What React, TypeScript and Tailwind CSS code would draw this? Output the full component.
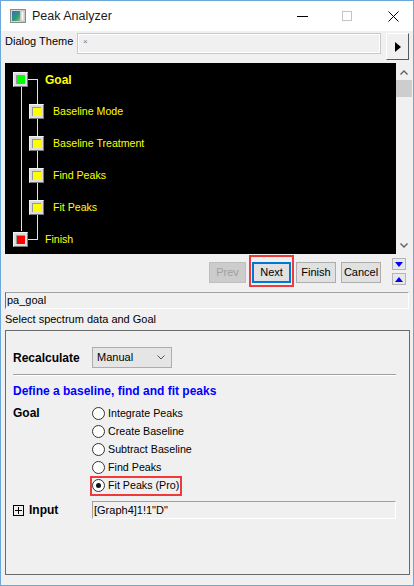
import React from "react";

const Box = ({ color }: { color: string }) => (
  <div className="w-[15px] h-[15px] border border-t-[#f4f4f4] border-l-[#f4f4f4] border-r-[#7a7a7a] border-b-[#7a7a7a] bg-[#dcdcdc] p-[2px] shrink-0">
    <div className="w-full h-full border-t border-l border-t-[#9a9a9a] border-l-[#9a9a9a]" style={{ background: color }} />
  </div>
);

const Radio = ({ label, checked }: { label: string; checked?: boolean }) => (
  <div className="h-[18px] flex items-center">
    <div className="w-[13px] h-[13px] rounded-full border border-[#333] bg-white flex items-center justify-center shrink-0">
      {checked && <div className="w-[5px] h-[5px] rounded-full bg-[#111]" />}
    </div>
    <span className="ml-[3px] text-[10.7px] text-black leading-none">{label}</span>
  </div>
);

const Btn = ({ label, disabled, cls }: { label: string; disabled?: boolean; cls?: string }) => (
  <div
    className={
      "h-[21px] flex items-center justify-center text-[11px] leading-none " +
      (disabled
        ? "bg-[#cccccc] border border-[#bfbfbf] text-[#a0a0a0] "
        : "bg-[#e1e1e1] border border-[#adadad] text-black ") +
      (cls || "")
    }
  >
    {label}
  </div>
);

export default function App() {
  return (
    <div className="w-[414px] h-[586px] bg-[#f0f0f0] border border-[#6fa6d8] flex flex-col overflow-hidden font-['Liberation_Sans',Arial,sans-serif] text-black">
      {/* Title bar */}
      <div className="h-[30px] bg-white flex items-center shrink-0">
        <svg className="ml-[9px]" width="16" height="14" viewBox="0 0 16 14">
          <defs>
            <linearGradient id="g1" x1="0" y1="0" x2="1" y2="1">
              <stop offset="0" stopColor="#3a6fb0" />
              <stop offset="0.6" stopColor="#2f9a7a" />
              <stop offset="1" stopColor="#7cc46a" />
            </linearGradient>
          </defs>
          <rect x="0.5" y="0.5" width="15" height="13" fill="#d8d8d8" stroke="#8a8a8a" />
          <rect x="2" y="2" width="8" height="10" fill="url(#g1)" />
          <rect x="11" y="2" width="3" height="10" fill="#f4f4f4" stroke="#a0a0a0" strokeWidth="0.5" />
        </svg>
        <span className="ml-[6px] text-[12.5px] text-[#1a1a1a]">Peak Analyzer</span>
        <div className="flex-1" />
        <svg width="11" height="10" viewBox="0 0 11 10">
          <line x1="0" y1="5.5" x2="11" y2="5.5" stroke="#000" strokeWidth="1" />
        </svg>
        <svg className="ml-[34px]" width="10" height="10" viewBox="0 0 10 10">
          <rect x="0.5" y="0.5" width="9" height="9" fill="none" stroke="#c4c4c4" />
        </svg>
        <svg className="ml-[36px] mr-[14px]" width="11" height="11" viewBox="0 0 11 11">
          <path d="M0.5 0.5 L10.5 10.5 M10.5 0.5 L0.5 10.5" stroke="#000" strokeWidth="1" />
        </svg>
      </div>

      {/* Dialog theme row */}
      <div className="h-[32px] flex items-start pl-[4px] pt-[2px] shrink-0">
        <span className="text-[11px] mt-[1px] w-[72px] leading-[14px]">Dialog Theme</span>
        <div className="w-[304px] h-[21px] border border-[#c9c9c9] bg-[#f0f0f0] flex items-center">
          <div className="w-full h-full border border-white flex items-start">
            <span className="ml-[4px] mt-[3px] text-[8px] text-[#777] leading-none">×</span>
          </div>
        </div>
        <div className="ml-[5px] w-[23px] h-[27px] border border-t-white border-l-white border-r-[#5a5a5a] border-b-[#5a5a5a] bg-[#f0f0f0] flex items-center justify-center">
          <svg width="6" height="10" viewBox="0 0 6 10">
            <path d="M0 0 L6 5 L0 10 Z" fill="#000" />
          </svg>
        </div>
      </div>

      {/* Tree panel */}
      <div className="h-[191px] ml-[4px] flex shrink-0">
        <div className="w-[391px] h-full bg-black relative">
          <svg className="absolute left-0 top-0" width="60" height="191" viewBox="0 0 60 191">
            <line x1="16.5" y1="23" x2="16.5" y2="168" stroke="#ffff00" />
            <line x1="32.5" y1="16" x2="32.5" y2="177" stroke="#ffff00" />
            <line x1="23" y1="16.5" x2="33" y2="16.5" stroke="#ffff00" />
            <line x1="23" y1="176.5" x2="33" y2="176.5" stroke="#ffff00" />
          </svg>
          <div className="relative flex flex-col">
            <div className="h-[32px] flex items-center pl-[8px]">
              <Box color="#00ff00" />
              <span className="ml-[17px] mt-[2px] text-[12px] font-bold text-[#ffff00]">Goal</span>
            </div>
            {["Baseline Mode", "Baseline Treatment", "Find Peaks", "Fit Peaks"].map((t) => (
              <div key={t} className="h-[32px] flex items-center pl-[24px]">
                <Box color="#ffff00" />
                <span className="ml-[9px] mt-[2px] text-[10.6px] text-[#ffff00]">{t}</span>
              </div>
            ))}
            <div className="h-[32px] flex items-center pl-[8px]">
              <Box color="#ff0000" />
              <span className="ml-[17px] mt-[2px] text-[10.6px] text-[#ffff00]">Finish</span>
            </div>
          </div>
        </div>
        <div className="w-[16px] h-full bg-[#f0f0f0] flex flex-col items-center">
          <svg className="mt-[7px]" width="8" height="5" viewBox="0 0 8 5">
            <path d="M0.5 4.5 L4 1 L7.5 4.5" stroke="#606060" strokeWidth="1.4" fill="none" />
          </svg>
          <div className="mt-[5px] w-full h-[17px] bg-[#cdcdcd]" />
          <div className="flex-1" />
          <svg className="mb-[6px]" width="8" height="5" viewBox="0 0 8 5">
            <path d="M0.5 0.5 L4 4 L7.5 0.5" stroke="#606060" strokeWidth="1.4" fill="none" />
          </svg>
        </div>
      </div>

      {/* Buttons row */}
      <div className="h-[38px] flex items-start pl-[208px] shrink-0">
        <Btn label="Prev" disabled cls="w-[37px] mt-[8px]" />
        <div className="relative ml-[6px] mt-[8px]">
          <div className="w-[39px] h-[21px] bg-[#e1e1e1] border-2 border-[#0078d7] flex items-center justify-center text-[11px] leading-none">
            Next
          </div>
          <div className="absolute left-[-3px] top-[-7px] w-[45px] h-[32px] border-2 border-[#ee3a3a]" />
        </div>
        <Btn label="Finish" cls="w-[40px] ml-[5px] mt-[8px]" />
        <Btn label="Cancel" cls="w-[40px] ml-[5px] mt-[8px]" />
        <div className="ml-[11px] mt-[4px] flex flex-col">
          <div className="w-[14px] h-[12px] bg-[#e8e8e8] border border-[#b5b5b5] flex items-center justify-center">
            <svg width="8" height="5" viewBox="0 0 8 5">
              <path d="M0 0 L8 0 L4 5 Z" fill="#0000ff" />
            </svg>
          </div>
          <div className="mt-[3px] w-[14px] h-[12px] bg-[#e8e8e8] border border-[#b5b5b5] flex items-center justify-center">
            <svg width="8" height="5" viewBox="0 0 8 5">
              <path d="M0 5 L8 5 L4 0 Z" fill="#0000ff" />
            </svg>
          </div>
        </div>
      </div>

      {/* pa_goal field */}
      <div className="ml-[4px] w-[404px] h-[17px] border border-t-[#a0a0a0] border-l-[#707070] border-r-white border-b-white bg-[#f0f0f0] flex items-center shrink-0">
        <span className="ml-[1px] text-[11px] leading-none">pa_goal</span>
      </div>
      <div className="h-[21px] ml-[4px] flex items-center shrink-0">
        <span className="text-[11px] leading-none">Select spectrum data and Goal</span>
      </div>

      {/* Main panel */}
      <div className="ml-[4px] w-[405px] h-[245px] border border-[#6a6a6a] flex flex-col shrink-0">
        <div className="mt-[16px] h-[21px] flex items-center pl-[7px]">
          <span className="w-[79px] text-[12px] font-bold">Recalculate</span>
          <div className="w-[80px] h-[21px] bg-[#e5e5e5] border border-[#adadad] flex items-center">
            <span className="ml-[4px] text-[11px] leading-none">Manual</span>
            <div className="flex-1" />
            <svg className="mr-[6px]" width="8" height="5" viewBox="0 0 8 5">
              <path d="M0.5 0.5 L4 4 L7.5 0.5" stroke="#555" strokeWidth="1" fill="none" />
            </svg>
          </div>
        </div>
        <div className="mt-[6px] ml-[7px] w-[383px] h-[2px] border-t border-t-[#a0a0a0] border-b border-b-white" />
        <div className="mt-[7px] ml-[7px] h-[15px] flex items-center">
          <span className="text-[12px] font-bold text-[#0000ff] leading-none">Define a baseline, find and fit peaks</span>
        </div>
        <div className="mt-[6px] ml-[7px] flex">
          <div className="w-[79px] h-[18px] flex items-center">
            <span className="text-[12px] font-bold leading-none">Goal</span>
          </div>
          <div className="flex flex-col">
            <Radio label="Integrate Peaks" />
            <Radio label="Create Baseline" />
            <Radio label="Subtract Baseline" />
            <Radio label="Find Peaks" />
            <div className="relative">
              <Radio label="Fit Peaks (Pro)" checked />
              <div className="absolute left-[-2px] top-[0px] w-[92px] h-[20px] border-2 border-[#ee3a3a]" />
            </div>
          </div>
        </div>
        <div className="mt-[7px] ml-[7px] flex items-center h-[18px]">
          <div className="w-[11px] h-[11px] border border-black flex items-center justify-center">
            <svg width="9" height="9" viewBox="0 0 9 9">
              <path d="M4.5 1 L4.5 8 M1 4.5 L8 4.5" stroke="#000" strokeWidth="1" />
            </svg>
          </div>
          <span className="ml-[5px] w-[63px] text-[12px] font-bold leading-none">Input</span>
          <div className="w-[304px] h-[18px] border border-t-[#a0a0a0] border-l-[#a0a0a0] border-r-white border-b-white flex items-center">
            <span className="ml-[1px] text-[11px] leading-none">[Graph4]1!1"D"</span>
          </div>
        </div>
      </div>
      <div className="flex-1" />
    </div>
  );
}
